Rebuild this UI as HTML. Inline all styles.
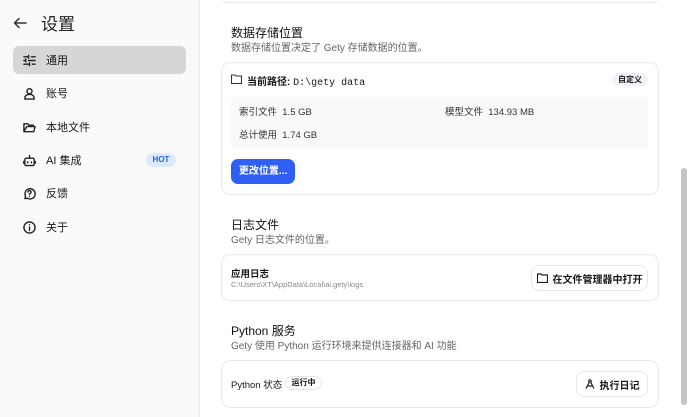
<!DOCTYPE html>
<html><head><meta charset="utf-8"><style>
*{box-sizing:border-box;margin:0;padding:0}
body{width:689px;height:417px;overflow:hidden;font-family:"Liberation Sans","Noto Sans CJK SC",sans-serif;background:#fff;color:#18181b;position:relative}
.side{position:absolute;left:0;top:0;width:200px;height:417px;background:#fafafa;border-right:1px solid #ececec}
.abs{position:absolute}
.item{position:absolute;left:13px;width:173px;height:28px;border-radius:6px;font-size:11px;display:flex;align-items:center;padding-left:10px}
.item svg{width:13px;height:13px;margin-right:10px;fill:none;stroke:#222;stroke-width:1.5;stroke-linecap:round;stroke-linejoin:round}
.card{position:absolute;left:221px;width:438px;border:1px solid #e8eaee;border-radius:9px;background:#fff}
.h{position:absolute;left:231px;font-size:12px;color:#111}
.s{position:absolute;left:231px;font-size:10px;color:#666}
.btn{position:absolute;border:1px solid #e5e7eb;border-radius:8px;font-size:10px;font-weight:bold;display:flex;align-items:center;justify-content:center;background:#fff}
</style></head><body>
<div class="side">
<svg class="abs" style="left:13px;top:16px" width="14" height="14" viewBox="0 0 14 14" fill="none" stroke="#333" stroke-width="1.5" stroke-linecap="round" stroke-linejoin="round"><path d="M13 7H2M6 2.5L1.5 7 6 11.5"/></svg>
<div class="abs" style="left:41px;top:10px;font-size:17px;color:#222">设置</div>
<div class="item" style="top:46px;background:#d6d6d6"><svg viewBox="0 0 14 14"><path d="M1 3h5M9 3h4M1 7h2M6 7h7M1 11h6M10 11h3M6 1.5v3M3 5.5v3M7 9.5v3"/></svg>通用</div>
<div class="item" style="top:79px"><svg viewBox="0 0 14 14"><circle cx="7" cy="4.5" r="2.7"/><path d="M2 13v-1a4 4 0 0 1 4-4h2a4 4 0 0 1 4 4v1z"/></svg>账号</div>
<div class="item" style="top:113px"><svg viewBox="0 0 14 14"><path d="M1 3v8.5h10.5L13 6H4L1 11.5M1 3h4l1.5 1.5H11V6"/></svg>本地文件</div>
<div class="item" style="top:146px"><svg viewBox="0 0 14 14"><rect x="2" y="4.5" width="10" height="8" rx="1.5"/><path d="M7 1.5v3M5 8.5v1M9 8.5v1M0.8 8v2M13.2 8v2"/></svg>AI 集成</div>
<div class="abs" style="left:146px;top:153px;width:30px;height:14px;border-radius:7px;background:#dbeafe;color:#2563eb;font-size:8px;font-weight:bold;text-align:center;line-height:14px">HOT</div>
<div class="item" style="top:179px"><svg viewBox="0 0 14 14"><path d="M2 12.5l.8-2.5A5.5 5.5 0 1 1 5 12.2z"/><path d="M5.5 5.5a1.6 1.6 0 1 1 2 1.5c-.5.2-.5.6-.5 1M7 10v.1"/></svg>反馈</div>
<div class="item" style="top:213px"><svg viewBox="0 0 14 14"><circle cx="7" cy="7" r="6"/><path d="M7 6.5v3.5M7 4v.1"/></svg>关于</div>
</div>

<div class="card" style="top:-10px;height:13px"></div>
<div class="h" style="top:24px">数据存储位置</div>
<div class="s" style="top:39px">数据存储位置决定了 Gety 存储数据的位置。</div>
<div class="card" style="top:62px;height:133px"></div>
<svg class="abs" style="left:231px;top:74px" width="11" height="10" viewBox="0 0 11 10" fill="none" stroke="#333" stroke-width="1.1"><path d="M.5 1h3.5l1 1h5.5v7.5h-10z"/></svg>
<div class="abs" style="left:247px;top:73px;font-size:10px;font-weight:bold">当前路径: <span style="font-family:'Liberation Mono',monospace;font-weight:normal">D:\gety data</span></div>
<div class="abs" style="left:612px;top:73px;width:36px;height:13px;border-radius:7px;background:#f1f3f6;font-size:8px;font-weight:bold;text-align:center;line-height:13px">自定义</div>
<div class="abs" style="left:231px;top:97px;width:417px;height:51px;background:#f8f9fb;border-radius:4px"></div>
<div class="abs" style="left:239px;top:104px;font-size:9.5px;color:#333">索引文件&nbsp; 1.5 GB</div>
<div class="abs" style="left:445px;top:104px;font-size:9.5px;color:#333">模型文件&nbsp; 134.93 MB</div>
<div class="abs" style="left:239px;top:127px;font-size:9.5px;color:#333">总计使用&nbsp; 1.74 GB</div>
<div class="abs" style="left:231px;top:159px;width:64px;height:25px;border-radius:7px;background:#2f5ff5;color:#fff;font-size:10px;font-weight:bold;text-align:center;line-height:25px">更改位置...</div>

<div class="h" style="top:216px">日志文件</div>
<div class="s" style="top:231px">Gety 日志文件的位置。</div>
<div class="card" style="top:254px;height:47px"></div>
<div class="abs" style="left:231px;top:266px;font-size:9.5px;font-weight:bold">应用日志</div>
<div class="abs" style="left:231px;top:280px;font-size:7.5px;color:#888">C:\Users\XT\AppData\Local\ai.gety\logs</div>
<div class="btn" style="left:531px;top:265px;width:117px;height:26px"><svg width="11" height="10" viewBox="0 0 11 10" fill="none" stroke="#222" stroke-width="1.2" style="margin-right:5px"><path d="M.5 1h3.5l1 1h5.5v7.5h-10z"/></svg>在文件管理器中打开</div>

<div class="h" style="top:322px">Python 服务</div>
<div class="s" style="top:337px">Gety 使用 Python 运行环境来提供连接器和 AI 功能</div>
<div class="card" style="top:360px;height:48px"></div>
<div class="abs" style="left:231px;top:377px;font-size:9.5px">Python 状态</div>
<div class="abs" style="left:285px;top:376px;width:37px;height:14px;border-radius:7px;border:1px solid #e5e7eb;font-size:8px;font-weight:bold;text-align:center;line-height:12px">运行中</div>
<div class="btn" style="left:576px;top:371px;width:72px;height:26px"><svg width="10" height="10" viewBox="0 0 10 10" fill="none" stroke="#222" stroke-width="1.2" style="margin-right:5px"><circle cx="5" cy="2" r="1.2"/><path d="M4.3 3.2L1 9.5M5.7 3.2L9 9.5M2.5 7h5"/></svg>执行日记</div>

<div class="abs" style="left:681px;top:168px;width:6px;height:237px;border-radius:3px;background:#c4c4c4"></div>
</body></html>
